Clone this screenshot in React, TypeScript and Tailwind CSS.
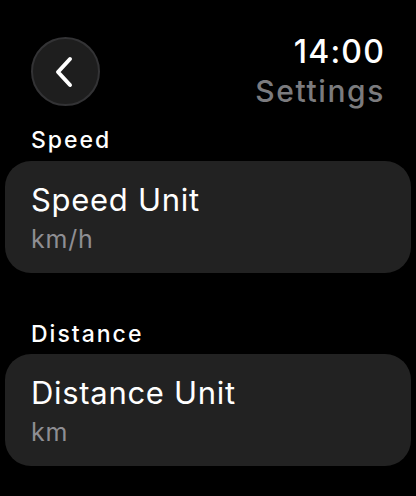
type Row = { section: string; title: string; value: string };

const rows: Row[] = [
  { section: "Speed", title: "Speed Unit", value: "km/h" },
  { section: "Distance", title: "Distance Unit", value: "km" },
];

const BackChevron = () => (
  <svg width="20" height="32" viewBox="0 0 20 32" fill="none" className="-ml-[3px]">
    <path
      d="M16 3 L4 16 L16 29"
      stroke="white"
      strokeWidth="4"
      strokeLinecap="round"
      strokeLinejoin="round"
    />
  </svg>
);

const SettingRow = ({ row, first }: { row: Row; first: boolean }) => (
  <div className={first ? "mt-[17px]" : "mt-[47px]"}>
    <div className="px-[31px] text-[23px] leading-[28px] font-medium tracking-[2px] text-white">
      {row.section}
    </div>
    <div className={`mx-[5px] ${first ? "mt-[7px]" : "mt-[6px]"} rounded-[26px] bg-[#222222] px-[26px] pt-[21px] pb-[19px]`}>
      <div className="text-[31px] leading-[36px] tracking-[0.7px] text-white">{row.title}</div>
      <div className="mt-[6px] text-[25px] leading-[30px] tracking-[0.8px] text-[#8e8e93]">{row.value}</div>
    </div>
  </div>
);

export default function App() {
  return (
    <div
      className="w-[416px] h-[496px] overflow-hidden bg-black"
      style={{ fontFamily: "Inter, 'Noto Sans', sans-serif" }}
    >
      <header className="flex items-start justify-between pt-[33px] pl-[31px] pr-[31px]">
        <button className="mt-[4px] flex h-[69px] w-[69px] items-center justify-center rounded-full border-2 border-[#333335] bg-[#1e1e1e]">
          <BackChevron />
        </button>
        <div className="flex flex-col items-end">
          <div className="text-[32px] leading-[38px] font-medium tracking-[1.2px] text-white">14:00</div>
          <div className="mt-[2px] text-[30px] leading-[36px] font-medium tracking-[1.6px] text-[#7b7b7e]">Settings</div>
        </div>
      </header>

      {rows.map((row, i) => (
        <SettingRow key={row.section} row={row} first={i === 0} />
      ))}
    </div>
  );
}
